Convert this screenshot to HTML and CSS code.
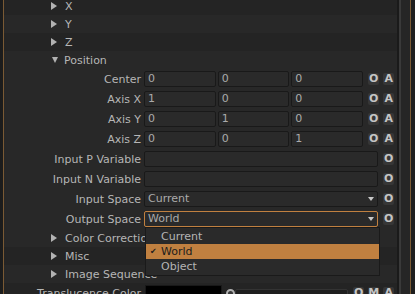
FILE: index.html
```html
<!DOCTYPE html>
<html lang="en">
<head>
<meta charset="UTF-8">
<meta name="viewport" content="width=device-width, initial-scale=1.0">
<title>Parameters</title>
<link rel="stylesheet" href="styles.css">
</head>
<body>

<div class="app">
  <div class="edge-left"></div>

  <div class="panel">
    <div class="rows">
      <div class="group"><span class="tri"></span>X</div>
      <div class="group alt"><span class="tri"></span>Y</div>
      <div class="group"><span class="tri"></span>Z</div>

      <div class="block alt">
        <div class="group"><span class="tri down"></span>Position</div>

        <div class="param">
          <label>Center</label>
          <div class="fields"><span class="field">0</span><span class="field">0</span><span class="field">0</span></div>
          <div class="btns"><span class="btn">O</span><span class="btn">A</span></div>
        </div>
        <div class="param">
          <label>Axis X</label>
          <div class="fields"><span class="field">1</span><span class="field">0</span><span class="field">0</span></div>
          <div class="btns"><span class="btn">O</span><span class="btn">A</span></div>
        </div>
        <div class="param">
          <label>Axis Y</label>
          <div class="fields"><span class="field">0</span><span class="field">1</span><span class="field">0</span></div>
          <div class="btns"><span class="btn">O</span><span class="btn">A</span></div>
        </div>
        <div class="param">
          <label>Axis Z</label>
          <div class="fields"><span class="field">0</span><span class="field">0</span><span class="field">1</span></div>
          <div class="btns"><span class="btn">O</span><span class="btn">A</span></div>
        </div>
        <div class="param">
          <label>Input P Variable</label>
          <div class="fields"><span class="field"></span></div>
          <div class="btns"><span class="btn">O</span></div>
        </div>
        <div class="param">
          <label>Input N Variable</label>
          <div class="fields"><span class="field"></span></div>
          <div class="btns"><span class="btn">O</span></div>
        </div>
        <div class="param">
          <label>Input Space</label>
          <div class="fields"><span class="field select">Current<i class="arrow"></i></span></div>
          <div class="btns"><span class="btn">O</span></div>
        </div>
        <div class="param">
          <label>Output Space</label>
          <div class="fields"><span class="field select open">World<i class="arrow"></i></span></div>
          <div class="btns"><span class="btn">O</span></div>
        </div>
      </div>

      <div class="group alt"><span class="tri"></span>Color Correction</div>
      <div class="group"><span class="tri"></span>Misc</div>
      <div class="group alt"><span class="tri"></span>Image Sequence</div>

      <div class="param color-row">
        <label>Translucence Color</label>
        <div class="fields">
          <span class="swatch"></span>
          <span class="knob"></span>
          <span class="track"></span>
        </div>
        <div class="btns"><span class="btn">O</span><span class="btn">M</span><span class="btn">A</span></div>
      </div>
    </div>

    <!-- open dropdown for Output Space -->
    <div class="popup">
      <div class="item">Current</div>
      <div class="item active"><span class="check">&#10004;</span>World</div>
      <div class="item">Object</div>
    </div>
  </div>

  <div class="edge-right">
    <div class="sep-dark"></div>
    <div class="sep-light"></div>
    <div class="gutter"></div>
    <div class="line-orange"></div>
    <div class="outside"></div>
  </div>
</div>

</body>
</html>
```

FILE: styles.css
```css
body {
  margin: 0;
  background: #1e1e1e;
  font-family: "DejaVu Sans", sans-serif;
  font-size: 11px;
  color: #b6b6b6;
  overflow: hidden;
}
.app { display: flex; height: 294px; }
.edge-left { width: 3px; background: #1c1c1c; border-right: 1px solid #7a5a34; }
.panel { position: relative; width: 393px; background: #242424; overflow: hidden; }
.rows { margin-top: -3px; }

/* Section headers */
.group { height: 18px; display: flex; align-items: center; padding-left: 47px; }
.alt { background: #282828; }
.block .group { background: transparent; }
.tri {
  width: 0; height: 0;
  margin-right: 8px;
  border-left: 6px solid #b2b2b2;
  border-top: 4px solid transparent;
  border-bottom: 4px solid transparent;
}
.tri.down {
  margin-left: 1px;
  margin-right: 6px;
  border-top: 6px solid #b2b2b2;
  border-left: 3.5px solid transparent;
  border-right: 3.5px solid transparent;
  border-bottom: 0;
}

/* Parameter rows */
.param { height: 20px; display: flex; align-items: center; padding-right: 3px; }
.param label { flex: none; width: 137px; margin-right: 3px; text-align: right; white-space: nowrap; }
.fields { flex: 1; display: flex; align-items: center; gap: 2px; }
.field {
  flex: 1;
  position: relative;
  height: 16px;
  box-sizing: border-box;
  padding-left: 3px;
  background: #2a2a2a;
  border: 1px solid #191919;
  border-radius: 2px;
  line-height: 14px;
  color: #ababab;
}
.field.open { border-color: #c08040; }
.arrow {
  position: absolute;
  right: 3px; top: 5px;
  border-top: 4px solid #c8c8c8;
  border-left: 3.5px solid transparent;
  border-right: 3.5px solid transparent;
}
.btns { display: flex; gap: 4px; margin-left: 5px; }
.btn {
  width: 11px; height: 12px;
  background: #363636;
  border-radius: 2px;
  text-align: center;
  line-height: 12px;
  font-size: 11px;
  font-weight: bold;
  letter-spacing: -0.5px;
  color: #c4c4c4;
}

/* Colour parameter */
.color-row .fields { gap: 0; }
.swatch { width: 77px; height: 16px; margin-left: 1px; background: #000; border: 1px solid #191919; box-sizing: border-box; }
.knob {
  width: 9px; height: 9px;
  margin-left: 4px;
  border: 2px solid #b0b0b0;
  border-radius: 50%;
  background: #3a3a3a;
  box-sizing: border-box;
}
.track { flex: 1; height: 6px; background: #1e1e1e; border: 1px solid #333; border-radius: 2px; }

/* Dropdown menu */
.popup {
  position: absolute;
  left: 141px; top: 227px;
  width: 235px;
  padding: 1px 0;
  background: #2a2a2a;
  border: 1px solid #1a1a1a;
  box-sizing: border-box;
}
.item { height: 15px; line-height: 15px; padding-left: 15px; position: relative; color: #b4b4b4; }
.item.active { background: #c08040; color: #1c1c1c; }
.check { position: absolute; left: 4px; font-size: 8px; }

/* Right border strips */
.edge-right { flex: 1; display: flex; }
.sep-dark { width: 2px; background: #1a1a1a; }
.sep-light { width: 2px; background: #3a3a3a; }
.gutter { width: 9px; background: #262626; }
.line-orange { width: 1px; background: #7a5a34; }
.outside { flex: 1; background: #1e1e1e; }
```
